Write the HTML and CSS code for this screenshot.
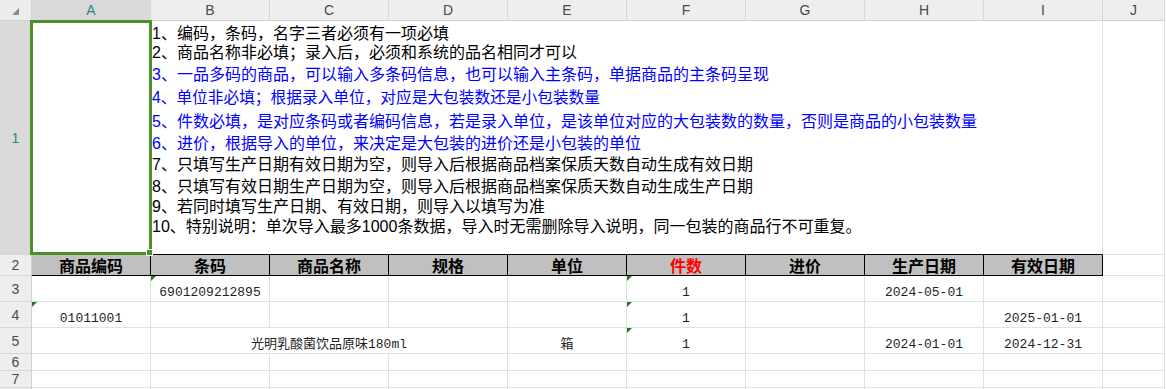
FILE: index.html
```html
<!DOCTYPE html>
<html lang="zh-CN">
<head>
    <meta charset="UTF-8">
    <meta name="viewport" content="width=device-width, initial-scale=1.0">
    <title>商品导入模板</title>
    <link rel="stylesheet" href="styles.css">
</head>
<body>

    <div class="sheet">
        <!-- column headers -->
        <div class="corner"><svg width="7" height="7" viewBox="0 0 7 7"><polygon points="7,0 7,7 0,7" fill="#8c8c8c"/></svg></div>
        <div class="col-head active">A</div>
        <div class="col-head">B</div>
        <div class="col-head">C</div>
        <div class="col-head">D</div>
        <div class="col-head">E</div>
        <div class="col-head">F</div>
        <div class="col-head">G</div>
        <div class="col-head">H</div>
        <div class="col-head">I</div>
        <div class="col-head">J</div>

        <!-- row 1: import notes -->
        <div class="row-head active">1</div>
        <div class="cell edge"></div>
        <div class="cell notes edge">
            <div class="line l1">1、编码，条码，名字三者必须有一项必填</div>
            <div class="line l2">2、商品名称非必填；录入后，必须和系统的品名相同才可以</div>
            <div class="line l3 blue">3、一品多码的商品，可以输入多条码信息，也可以输入主条码，单据商品的主条码呈现</div>
            <div class="line l4 blue">4、单位非必填；根据录入单位，对应是大包装数还是小包装数量</div>
            <div class="line l5 blue">5、件数必填，是对应条码或者编码信息，若是录入单位，是该单位对应的大包装数的数量，否则是商品的小包装数量</div>
            <div class="line l6 blue">6、进价，根据导入的单位，来决定是大包装的进价还是小包装的单位</div>
            <div class="line l7">7、只填写生产日期有效日期为空，则导入后根据商品档案保质天数自动生成有效日期</div>
            <div class="line l8">8、只填写有效日期生产日期为空，则导入后根据商品档案保质天数自动生成生产日期</div>
            <div class="line l9">9、若同时填写生产日期、有效日期，则导入以填写为准</div>
            <div class="line l10">10、特别说明：单次导入最多1000条数据，导入时无需删除导入说明，同一包装的商品行不可重复。</div>
        </div>
        <div class="cell"></div>

        <!-- row 2: field titles -->
        <div class="row-head">2</div>
        <div class="cell title">商品编码</div>
        <div class="cell title">条码</div>
        <div class="cell title">商品名称</div>
        <div class="cell title">规格</div>
        <div class="cell title">单位</div>
        <div class="cell title required">件数</div>
        <div class="cell title">进价</div>
        <div class="cell title">生产日期</div>
        <div class="cell title">有效日期</div>
        <div class="cell"></div>

        <!-- row 3 -->
        <div class="row-head">3</div>
        <div class="cell"></div>
        <div class="cell data flag">6901209212895</div>
        <div class="cell"></div>
        <div class="cell"></div>
        <div class="cell"></div>
        <div class="cell data flag">1</div>
        <div class="cell"></div>
        <div class="cell data">2024-05-01</div>
        <div class="cell"></div>
        <div class="cell"></div>

        <!-- row 4 -->
        <div class="row-head">4</div>
        <div class="cell data flag">01011001</div>
        <div class="cell"></div>
        <div class="cell"></div>
        <div class="cell"></div>
        <div class="cell"></div>
        <div class="cell data flag">1</div>
        <div class="cell"></div>
        <div class="cell"></div>
        <div class="cell data">2025-01-01</div>
        <div class="cell"></div>

        <!-- row 5 -->
        <div class="row-head">5</div>
        <div class="cell"></div>
        <div class="cell data wide">光明乳酸菌饮品原味180ml</div>
        <div class="cell data">箱</div>
        <div class="cell data flag">1</div>
        <div class="cell"></div>
        <div class="cell data">2024-01-01</div>
        <div class="cell data">2024-12-31</div>
        <div class="cell"></div>

        <!-- rows 6-8 -->
        <div class="row-head">6</div>
        <div class="cell"></div><div class="cell"></div><div class="cell"></div><div class="cell"></div><div class="cell"></div>
        <div class="cell"></div><div class="cell"></div><div class="cell"></div><div class="cell"></div><div class="cell"></div>

        <div class="row-head">7</div>
        <div class="cell"></div><div class="cell"></div><div class="cell"></div><div class="cell"></div><div class="cell"></div>
        <div class="cell"></div><div class="cell"></div><div class="cell"></div><div class="cell"></div><div class="cell"></div>

        <div class="row-head"></div>
        <div class="cell"></div><div class="cell"></div><div class="cell"></div><div class="cell"></div><div class="cell"></div>
        <div class="cell"></div><div class="cell"></div><div class="cell"></div><div class="cell"></div><div class="cell"></div>

        <!-- active cell A1 -->
        <div class="selection"><span class="handle"></span></div>
    </div>

</body>
</html>
```

FILE: styles.css
```css
html, body { margin: 0; padding: 0; background: #fff; overflow: hidden; }
body { width: 1166px; height: 389px; font-family: "Liberation Sans", "Noto Sans CJK SC", sans-serif; }

.sheet { position: relative; display: grid; grid-template-columns: 32px repeat(9, 119px) 62px; grid-template-rows: 21px 234px 21px 26px 26px 26px 17px 17px 17px; }

.corner { background: #ececec; border-right: 1px solid #d4d4d4; border-bottom: 1px solid #d0d0d0; display: flex; align-items: flex-end; justify-content: flex-end; padding: 0 12px 5px 0; box-sizing: border-box; }
.col-head { background: #eeeeee; border-right: 1px solid #d8d8d8; border-bottom: 1px solid #d0d0d0; box-sizing: border-box; display: flex; align-items: center; justify-content: center; font-size: 14px; color: #4a4a4a; }
.row-head { background: #eeeeee; border-right: 1px solid #d0d0d0; border-bottom: 1px solid #d8d8d8; box-sizing: border-box; display: flex; align-items: center; justify-content: center; font-size: 14px; color: #4a4a4a; }
.col-head.active, .row-head.active { background: #dadada; color: #2a8486; }

.cell { position: relative; border-right: 1px solid #e1e1e1; border-bottom: 1px solid #e1e1e1; box-sizing: border-box; }
.cell.edge { border-bottom-color: #000; }

/* notes in B1, overflowing across to I */
.notes { grid-column: span 8; padding: 2px 0 0 1px; font-size: 16px; color: #000; white-space: nowrap; }
.line { display: flex; align-items: center; }
.blue { color: #0000ff; }
.l1 { height: 18px; }
.l2 { height: 20px; }
.l3 { height: 24px; }
.l4 { height: 23px; font-size: 15.7px; }
.l5 { height: 23px; }
.l6 { height: 21px; }
.l7 { height: 22px; }
.l8 { height: 21px; }
.l9 { height: 20px; }
.l10 { height: 20px; }

.title { background: #c0c0c0; border-right-color: #000; border-bottom-color: #000; display: flex; align-items: center; justify-content: center; font-family: "Noto Sans CJK SC", sans-serif; font-weight: 700; font-size: 16px; color: #000; }
.title.required { color: #ff0000; }

.data { display: flex; align-items: flex-end; justify-content: center; font-family: "Liberation Mono", "Noto Sans CJK SC", monospace; font-size: 13px; line-height: 14px; color: #1f1f1f; white-space: nowrap; padding-bottom: 1px; }
.data.wide { grid-column: span 3; }

.flag::before { content: ""; position: absolute; left: 0; top: 0; border-top: 5px solid #1d7a1d; border-right: 5px solid transparent; }

.selection { position: absolute; left: 30px; top: 20px; width: 122px; height: 235px; border: 3px solid #4a8f28; box-sizing: border-box; pointer-events: none; }
.handle { position: absolute; right: -4px; bottom: -4px; width: 5px; height: 5px; background: #4a8f28; border: 1px solid #fff; }
```
